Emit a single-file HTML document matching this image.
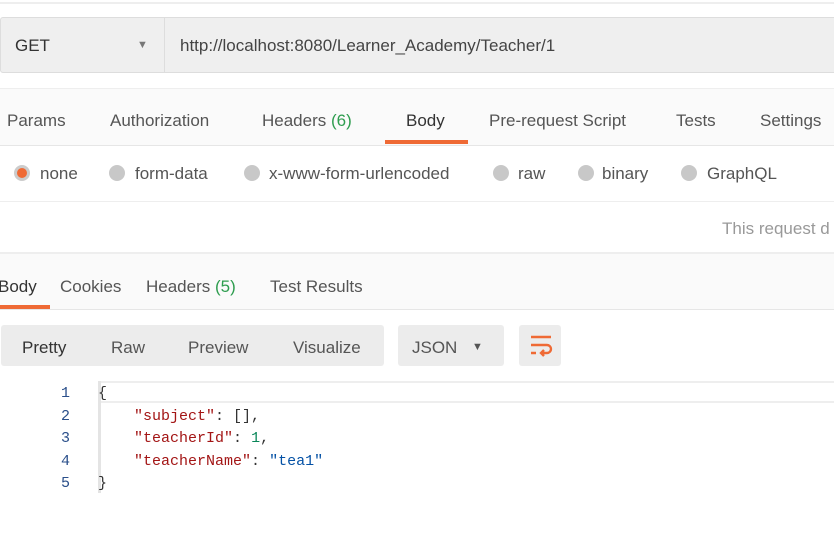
<!DOCTYPE html>
<html><head><style>
*{margin:0;padding:0;box-sizing:border-box}
body{width:834px;height:540px;background:#fff;font-family:"Liberation Sans",sans-serif;color:#555;position:relative;overflow:hidden;font-size:17px}
.a{position:absolute;white-space:nowrap}
.g{color:#2e9d4f}
.rad{position:absolute;width:16px;height:16px;border-radius:50%;background:#c8c8c8;top:165px}
.mono{font-family:"Liberation Mono",monospace;font-size:15px}
</style></head><body>
<div class="a" style="left:0;top:2px;width:834px;height:2px;background:#eee"></div>
<div class="a" style="left:0;top:17px;width:850px;height:56px;background:#efefef;border:1px solid #ddd;border-radius:3px"></div>
<div class="a" style="left:164px;top:17px;width:1px;height:56px;background:#ddd"></div>
<div class="a" style="left:15px;top:36px;color:#333">GET</div>
<div class="a" style="left:137px;top:39px;font-size:11px;color:#777">▼</div>
<div class="a" style="left:180px;top:36px;color:#444">http://localhost:8080/Learner_Academy/Teacher/1</div>
<div class="a" style="left:0;top:88px;width:834px;height:58px;background:#fafafa;border-top:1px solid #eee;border-bottom:1px solid #e6e6e6"></div>
<div class="a" style="left:7px;top:111px">Params</div>
<div class="a" style="left:110px;top:111px">Authorization</div>
<div class="a" style="left:262px;top:111px">Headers <span class="g">(6)</span></div>
<div class="a" style="left:406px;top:111px;color:#333">Body</div>
<div class="a" style="left:385px;top:140px;width:83px;height:4px;background:#ef6a35"></div>
<div class="a" style="left:489px;top:111px">Pre-request Script</div>
<div class="a" style="left:676px;top:111px">Tests</div>
<div class="a" style="left:760px;top:111px">Settings</div>
<div class="rad" style="left:14px;background:#ef6a35;border:3px solid #ccc"></div>
<div class="a" style="left:40px;top:164px">none</div>
<div class="rad" style="left:109px"></div><div class="a" style="left:135px;top:164px">form-data</div>
<div class="rad" style="left:244px"></div><div class="a" style="left:269px;top:164px">x-www-form-urlencoded</div>
<div class="rad" style="left:493px"></div><div class="a" style="left:518px;top:164px">raw</div>
<div class="rad" style="left:578px"></div><div class="a" style="left:602px;top:164px">binary</div>
<div class="rad" style="left:681px"></div><div class="a" style="left:707px;top:164px">GraphQL</div>
<div class="a" style="left:0;top:201px;width:834px;height:1px;background:#eee"></div>
<div class="a" style="left:722px;top:219px;color:#999">This request d</div>
<div class="a" style="left:0;top:252px;width:834px;height:58px;background:#fafafa;border-top:2px solid #eee;border-bottom:1px solid #e6e6e6"></div>
<div class="a" style="left:-2px;top:277px;color:#333">Body</div>
<div class="a" style="left:0;top:305px;width:50px;height:4px;background:#ef6a35"></div>
<div class="a" style="left:60px;top:277px">Cookies</div>
<div class="a" style="left:146px;top:277px">Headers <span class="g">(5)</span></div>
<div class="a" style="left:270px;top:277px">Test Results</div>
<div class="a" style="left:1px;top:325px;width:383px;height:41px;background:#ececec;border-radius:3px"></div>
<div class="a" style="left:22px;top:338px;color:#333">Pretty</div>
<div class="a" style="left:111px;top:338px">Raw</div>
<div class="a" style="left:188px;top:338px">Preview</div>
<div class="a" style="left:293px;top:338px">Visualize</div>
<div class="a" style="left:398px;top:325px;width:106px;height:41px;background:#ececec;border-radius:3px"></div>
<div class="a" style="left:412px;top:338px">JSON</div>
<div class="a" style="left:472px;top:341px;font-size:11px;color:#555">▼</div>
<div class="a" style="left:519px;top:325px;width:42px;height:41px;background:#ececec;border-radius:3px"></div>
<svg class="a" style="left:529px;top:334px" width="24" height="24" viewBox="0 0 24 24"><path d="M2 3h20M2 11h16a4 4 0 0 1 0 8h-6M15 16l-3 3 3 3M2 19h5" stroke="#ef6a35" stroke-width="2.4" fill="none"/></svg>
<div class="a" style="left:100px;top:381px;width:734px;height:22px;border:2px solid #eee;border-left:none;border-right:none"></div>
<div class="a" style="left:98px;top:381px;width:3px;height:112px;background:#e4e4e4"></div>
<div class="a mono" style="left:61px;top:383px;color:#2a4f8a;line-height:22.5px">1<br>2<br>3<br>4<br>5</div>
<div class="a mono" style="left:98px;top:383px;color:#333;line-height:22.5px">{<br>&nbsp;&nbsp;&nbsp;&nbsp;<span style="color:#a31515">"subject"</span>: [],<br>&nbsp;&nbsp;&nbsp;&nbsp;<span style="color:#a31515">"teacherId"</span>: <span style="color:#098658">1</span>,<br>&nbsp;&nbsp;&nbsp;&nbsp;<span style="color:#a31515">"teacherName"</span>: <span style="color:#0451a5">"tea1"</span><br>}</div>
</body></html>
